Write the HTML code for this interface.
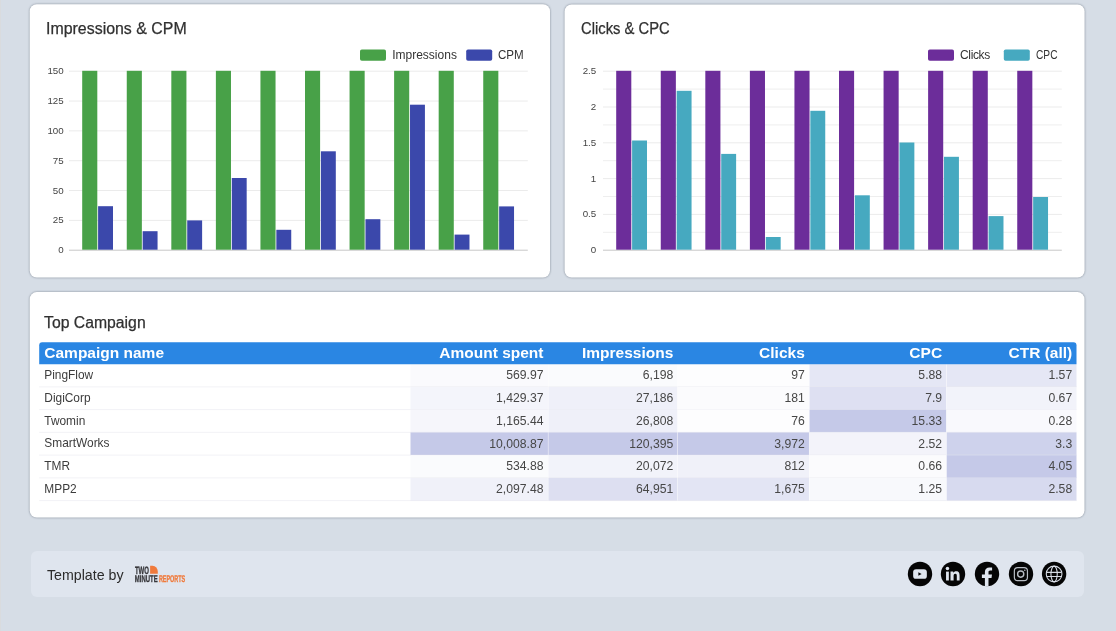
<!DOCTYPE html>
<html><head><meta charset="utf-8"><title>Dashboard</title>
<style>
html,body{margin:0;padding:0;}
body{width:1116px;height:631px;overflow:hidden;background:#d6dde6;font-family:"Liberation Sans", sans-serif;position:relative;color:#333;}
.abs{position:absolute;}
.card{position:absolute;background:#fff;border-radius:7px;box-shadow:0.4px 0.5px 2px 0.4px rgba(60,70,80,.4);}
.title{position:absolute;font-size:15.8px;line-height:18px;color:#303030;-webkit-text-stroke:0.25px #303030;white-space:nowrap;transform-origin:0 0;}
.yl{position:absolute;font-size:9.75px;line-height:10px;color:#444;text-align:right;width:40px;white-space:nowrap;}
.lg{position:absolute;font-size:12px;line-height:14px;color:#333;white-space:nowrap;}
.sw{position:absolute;border-radius:1.5px;}
.bar{position:absolute;}
.gl{position:absolute;height:1px;}
.th{position:absolute;font-weight:bold;font-size:15.5px;line-height:22px;color:#fff;white-space:nowrap;text-align:right;}
.td{position:absolute;font-size:11.9px;line-height:22px;color:#3c3c3c;white-space:nowrap;text-align:right;}
.cell{position:absolute;}
.num{font-size:12.2px;color:#474747;}
</style></head><body><div id="L" style="position:absolute;left:0;top:0;width:1116px;height:631px;will-change:transform">
<div class="abs" style="left:0;top:0;width:1px;height:631px;background:#d9dbde"></div>
<svg class="abs" style="left:0;top:0" width="1116" height="631" viewBox="0 0 1116 631">
<g fill="#fff" style="filter:drop-shadow(0.3px 0.5px 0.9px rgba(55,65,80,.55))">
<rect x="29.7" y="4.3" width="520.3" height="273.3" rx="7"/>
<rect x="564.6" y="4.4" width="520.0" height="273.2" rx="7"/>
<rect x="29.7" y="292.1" width="1054.8" height="225.4" rx="7"/>
</g>
</svg>
<div class="title" style="left:46.2px;top:19.7px;transform:scaleX(1.008)">Impressions &amp; CPM</div>
<svg class="abs" style="left:60.0px;top:44px" width="480" height="216" viewBox="60.0 44 480 216">
<rect x="360.0" y="49.4" width="26" height="11.4" rx="1.8" fill="#48a148"/>
<rect x="466.2" y="49.4" width="26" height="11.4" rx="1.8" fill="#3b48ab"/>
<rect x="69.0" y="70.70" width="458.8" height="1" fill="#ebebeb"/>
<rect x="69.0" y="100.53" width="458.8" height="1" fill="#ebebeb"/>
<rect x="69.0" y="130.37" width="458.8" height="1" fill="#ebebeb"/>
<rect x="69.0" y="160.20" width="458.8" height="1" fill="#ebebeb"/>
<rect x="69.0" y="190.03" width="458.8" height="1" fill="#ebebeb"/>
<rect x="69.0" y="219.87" width="458.8" height="1" fill="#ebebeb"/>
<rect x="69.0" y="249.70" width="458.8" height="1" fill="#c8c8c8"/>
<rect x="82.20" y="70.80" width="15.1" height="178.90" fill="#48a148"/>
<rect x="98.10" y="206.20" width="14.9" height="43.50" fill="#3b48ab"/>
<rect x="126.76" y="70.80" width="15.1" height="178.90" fill="#48a148"/>
<rect x="142.66" y="231.20" width="14.9" height="18.50" fill="#3b48ab"/>
<rect x="171.32" y="70.80" width="15.1" height="178.90" fill="#48a148"/>
<rect x="187.22" y="220.40" width="14.9" height="29.30" fill="#3b48ab"/>
<rect x="215.88" y="70.80" width="15.1" height="178.90" fill="#48a148"/>
<rect x="231.78" y="178.00" width="14.9" height="71.70" fill="#3b48ab"/>
<rect x="260.44" y="70.80" width="15.1" height="178.90" fill="#48a148"/>
<rect x="276.34" y="229.80" width="14.9" height="19.90" fill="#3b48ab"/>
<rect x="305.00" y="70.80" width="15.1" height="178.90" fill="#48a148"/>
<rect x="320.90" y="151.30" width="14.9" height="98.40" fill="#3b48ab"/>
<rect x="349.56" y="70.80" width="15.1" height="178.90" fill="#48a148"/>
<rect x="365.46" y="219.20" width="14.9" height="30.50" fill="#3b48ab"/>
<rect x="394.12" y="70.80" width="15.1" height="178.90" fill="#48a148"/>
<rect x="410.02" y="104.70" width="14.9" height="145.00" fill="#3b48ab"/>
<rect x="438.68" y="70.80" width="15.1" height="178.90" fill="#48a148"/>
<rect x="454.58" y="234.60" width="14.9" height="15.10" fill="#3b48ab"/>
<rect x="483.24" y="70.80" width="15.1" height="178.90" fill="#48a148"/>
<rect x="499.14" y="206.40" width="14.9" height="43.30" fill="#3b48ab"/>
</svg>
<div class="yl" style="left:23.7px;top:66.2px">150</div>
<div class="yl" style="left:23.7px;top:96.0px">125</div>
<div class="yl" style="left:23.7px;top:125.9px">100</div>
<div class="yl" style="left:23.7px;top:155.7px">75</div>
<div class="yl" style="left:23.7px;top:185.5px">50</div>
<div class="yl" style="left:23.7px;top:215.4px">25</div>
<div class="yl" style="left:23.7px;top:245.2px">0</div>
<div class="lg" style="left:392.2px;top:47.8px;">Impressions</div>
<div class="lg" style="left:498.4px;top:47.8px;transform:scaleX(0.965);transform-origin:0 0">CPM</div>
<div class="title" style="left:581.0px;top:20.2px;transform:scaleX(0.936)">Clicks &amp; CPC</div>
<svg class="abs" style="left:594.0px;top:44px" width="480" height="216" viewBox="594.0 44 480 216">
<rect x="928.0" y="49.4" width="26" height="11.4" rx="1.8" fill="#6c2d9a"/>
<rect x="1003.8" y="49.4" width="26" height="11.4" rx="1.8" fill="#46a9c0"/>
<rect x="603.0" y="70.70" width="458.8" height="1" fill="#ebebeb"/>
<rect x="603.0" y="88.60" width="458.8" height="1" fill="#eeeeee"/>
<rect x="603.0" y="106.50" width="458.8" height="1" fill="#ebebeb"/>
<rect x="603.0" y="124.40" width="458.8" height="1" fill="#eeeeee"/>
<rect x="603.0" y="142.30" width="458.8" height="1" fill="#ebebeb"/>
<rect x="603.0" y="160.20" width="458.8" height="1" fill="#eeeeee"/>
<rect x="603.0" y="178.10" width="458.8" height="1" fill="#ebebeb"/>
<rect x="603.0" y="196.00" width="458.8" height="1" fill="#eeeeee"/>
<rect x="603.0" y="213.90" width="458.8" height="1" fill="#ebebeb"/>
<rect x="603.0" y="231.80" width="458.8" height="1" fill="#eeeeee"/>
<rect x="603.0" y="249.70" width="458.8" height="1" fill="#c8c8c8"/>
<rect x="616.20" y="70.80" width="15.1" height="178.90" fill="#6c2d9a"/>
<rect x="632.10" y="140.50" width="14.9" height="109.20" fill="#46a9c0"/>
<rect x="660.76" y="70.80" width="15.1" height="178.90" fill="#6c2d9a"/>
<rect x="676.66" y="90.80" width="14.9" height="158.90" fill="#46a9c0"/>
<rect x="705.32" y="70.80" width="15.1" height="178.90" fill="#6c2d9a"/>
<rect x="721.22" y="153.90" width="14.9" height="95.80" fill="#46a9c0"/>
<rect x="749.88" y="70.80" width="15.1" height="178.90" fill="#6c2d9a"/>
<rect x="765.78" y="237.00" width="14.9" height="12.70" fill="#46a9c0"/>
<rect x="794.44" y="70.80" width="15.1" height="178.90" fill="#6c2d9a"/>
<rect x="810.34" y="110.80" width="14.9" height="138.90" fill="#46a9c0"/>
<rect x="839.00" y="70.80" width="15.1" height="178.90" fill="#6c2d9a"/>
<rect x="854.90" y="195.30" width="14.9" height="54.40" fill="#46a9c0"/>
<rect x="883.56" y="70.80" width="15.1" height="178.90" fill="#6c2d9a"/>
<rect x="899.46" y="142.50" width="14.9" height="107.20" fill="#46a9c0"/>
<rect x="928.12" y="70.80" width="15.1" height="178.90" fill="#6c2d9a"/>
<rect x="944.02" y="156.80" width="14.9" height="92.90" fill="#46a9c0"/>
<rect x="972.68" y="70.80" width="15.1" height="178.90" fill="#6c2d9a"/>
<rect x="988.58" y="216.10" width="14.9" height="33.60" fill="#46a9c0"/>
<rect x="1017.24" y="70.80" width="15.1" height="178.90" fill="#6c2d9a"/>
<rect x="1033.14" y="197.00" width="14.9" height="52.70" fill="#46a9c0"/>
</svg>
<div class="yl" style="left:556.2px;top:66.2px">2.5</div>
<div class="yl" style="left:556.2px;top:102.0px">2</div>
<div class="yl" style="left:556.2px;top:137.8px">1.5</div>
<div class="yl" style="left:556.2px;top:173.6px">1</div>
<div class="yl" style="left:556.2px;top:209.4px">0.5</div>
<div class="yl" style="left:556.2px;top:245.2px">0</div>
<div class="lg" style="left:960.0px;top:47.8px;letter-spacing:-0.35px">Clicks</div>
<div class="lg" style="left:1035.8px;top:47.8px;transform:scaleX(0.85);transform-origin:0 0">CPC</div>
<div class="title" style="left:44.0px;top:314.1px;transform:scaleX(0.998)">Top Campaign</div>
<svg class="abs" style="left:30px;top:340px" width="1056" height="166" viewBox="30 340 1056 166">
<rect x="410.5" y="364.20" width="137.7" height="22.75" fill="#fafafd"/>
<rect x="548.2" y="364.20" width="129.4" height="22.75" fill="#fafbfd"/>
<rect x="677.6" y="364.20" width="131.7" height="22.75" fill="#fdfdfe"/>
<rect x="809.3" y="364.20" width="137.2" height="22.75" fill="#e5e7f5"/>
<rect x="946.5" y="364.20" width="130.0" height="22.75" fill="#e5e7f5"/>
<rect x="39.2" y="386.35" width="1037.3" height="1" fill="#e6e6ee" fill-opacity="0.5"/>
<rect x="410.5" y="386.95" width="137.7" height="22.75" fill="#f4f5fb"/>
<rect x="548.2" y="386.95" width="129.4" height="22.75" fill="#eff0f9"/>
<rect x="677.6" y="386.95" width="131.7" height="22.75" fill="#fbfbfd"/>
<rect x="809.3" y="386.95" width="137.2" height="22.75" fill="#dee0f2"/>
<rect x="946.5" y="386.95" width="130.0" height="22.75" fill="#f2f3fa"/>
<rect x="39.2" y="409.10" width="1037.3" height="1" fill="#e6e6ee" fill-opacity="0.5"/>
<rect x="410.5" y="409.70" width="137.7" height="22.75" fill="#f6f6fb"/>
<rect x="548.2" y="409.70" width="129.4" height="22.75" fill="#eff0f9"/>
<rect x="677.6" y="409.70" width="131.7" height="22.75" fill="#fdfdfe"/>
<rect x="809.3" y="409.70" width="137.2" height="22.75" fill="#c5c9e8"/>
<rect x="946.5" y="409.70" width="130.0" height="22.75" fill="#f9f9fd"/>
<rect x="39.2" y="431.85" width="1037.3" height="1" fill="#e6e6ee" fill-opacity="0.5"/>
<rect x="410.5" y="432.45" width="137.7" height="22.75" fill="#c5c9e8"/>
<rect x="548.2" y="432.45" width="129.4" height="22.75" fill="#c5c9e8"/>
<rect x="677.6" y="432.45" width="131.7" height="22.75" fill="#c5c9e8"/>
<rect x="809.3" y="432.45" width="137.2" height="22.75" fill="#f3f3fa"/>
<rect x="946.5" y="432.45" width="130.0" height="22.75" fill="#ced2ec"/>
<rect x="39.2" y="454.60" width="1037.3" height="1" fill="#e6e6ee" fill-opacity="0.5"/>
<rect x="410.5" y="455.20" width="137.7" height="22.75" fill="#fafbfd"/>
<rect x="548.2" y="455.20" width="129.4" height="22.75" fill="#f2f3fa"/>
<rect x="677.6" y="455.20" width="131.7" height="22.75" fill="#f0f1f9"/>
<rect x="809.3" y="455.20" width="137.2" height="22.75" fill="#fbfbfd"/>
<rect x="946.5" y="455.20" width="130.0" height="22.75" fill="#c5c9e8"/>
<rect x="39.2" y="477.35" width="1037.3" height="1" fill="#e6e6ee" fill-opacity="0.5"/>
<rect x="410.5" y="477.95" width="137.7" height="22.75" fill="#f0f1f9"/>
<rect x="548.2" y="477.95" width="129.4" height="22.75" fill="#dddff1"/>
<rect x="677.6" y="477.95" width="131.7" height="22.75" fill="#e3e5f4"/>
<rect x="809.3" y="477.95" width="137.2" height="22.75" fill="#f8f9fc"/>
<rect x="946.5" y="477.95" width="130.0" height="22.75" fill="#d7daef"/>
<rect x="39.2" y="500.10" width="1037.3" height="1" fill="#e6e6ee" fill-opacity="0.5"/>
<rect x="547.8" y="364.20" width="0.8" height="136.50" fill="#fff" fill-opacity="0.45"/>
<rect x="677.2" y="364.20" width="0.8" height="136.50" fill="#fff" fill-opacity="0.45"/>
<rect x="808.9" y="364.20" width="0.8" height="136.50" fill="#fff" fill-opacity="0.45"/>
<rect x="946.1" y="364.20" width="0.8" height="136.50" fill="#fff" fill-opacity="0.45"/>
<path d="M39.2 364.20 v-19 a3 3 0 0 1 3 -3 h1031.3 a3 3 0 0 1 3 3 v19 z" fill="#2a86e3"/>
</svg>
<div class="th" style="left:44.3px;top:341.8px;text-align:left">Campaign name</div>
<div class="th" style="left:410.5px;top:341.8px;width:133.0px">Amount spent</div>
<div class="th" style="left:548.2px;top:341.8px;width:125.1px">Impressions</div>
<div class="th" style="left:677.6px;top:341.8px;width:127.2px">Clicks</div>
<div class="th" style="left:809.3px;top:341.8px;width:132.8px">CPC</div>
<div class="th" style="left:946.5px;top:341.8px;width:125.7px">CTR (all)</div>
<div class="td" style="left:44.3px;top:364.1px;text-align:left">PingFlow</div>
<div class="td num" style="left:410.5px;top:364.4px;width:133.0px">569.97</div>
<div class="td num" style="left:548.2px;top:364.4px;width:125.1px">6,198</div>
<div class="td num" style="left:677.6px;top:364.4px;width:127.2px">97</div>
<div class="td num" style="left:809.3px;top:364.4px;width:132.8px">5.88</div>
<div class="td num" style="left:946.5px;top:364.4px;width:125.7px">1.57</div>
<div class="td" style="left:44.3px;top:386.8px;text-align:left">DigiCorp</div>
<div class="td num" style="left:410.5px;top:387.1px;width:133.0px">1,429.37</div>
<div class="td num" style="left:548.2px;top:387.1px;width:125.1px">27,186</div>
<div class="td num" style="left:677.6px;top:387.1px;width:127.2px">181</div>
<div class="td num" style="left:809.3px;top:387.1px;width:132.8px">7.9</div>
<div class="td num" style="left:946.5px;top:387.1px;width:125.7px">0.67</div>
<div class="td" style="left:44.3px;top:409.6px;text-align:left">Twomin</div>
<div class="td num" style="left:410.5px;top:409.9px;width:133.0px">1,165.44</div>
<div class="td num" style="left:548.2px;top:409.9px;width:125.1px">26,808</div>
<div class="td num" style="left:677.6px;top:409.9px;width:127.2px">76</div>
<div class="td num" style="left:809.3px;top:409.9px;width:132.8px">15.33</div>
<div class="td num" style="left:946.5px;top:409.9px;width:125.7px">0.28</div>
<div class="td" style="left:44.3px;top:432.3px;text-align:left">SmartWorks</div>
<div class="td num" style="left:410.5px;top:432.6px;width:133.0px">10,008.87</div>
<div class="td num" style="left:548.2px;top:432.6px;width:125.1px">120,395</div>
<div class="td num" style="left:677.6px;top:432.6px;width:127.2px">3,972</div>
<div class="td num" style="left:809.3px;top:432.6px;width:132.8px">2.52</div>
<div class="td num" style="left:946.5px;top:432.6px;width:125.7px">3.3</div>
<div class="td" style="left:44.3px;top:455.1px;text-align:left">TMR</div>
<div class="td num" style="left:410.5px;top:455.4px;width:133.0px">534.88</div>
<div class="td num" style="left:548.2px;top:455.4px;width:125.1px">20,072</div>
<div class="td num" style="left:677.6px;top:455.4px;width:127.2px">812</div>
<div class="td num" style="left:809.3px;top:455.4px;width:132.8px">0.66</div>
<div class="td num" style="left:946.5px;top:455.4px;width:125.7px">4.05</div>
<div class="td" style="left:44.3px;top:477.8px;text-align:left">MPP2</div>
<div class="td num" style="left:410.5px;top:478.1px;width:133.0px">2,097.48</div>
<div class="td num" style="left:548.2px;top:478.1px;width:125.1px">64,951</div>
<div class="td num" style="left:677.6px;top:478.1px;width:127.2px">1,675</div>
<div class="td num" style="left:809.3px;top:478.1px;width:132.8px">1.25</div>
<div class="td num" style="left:946.5px;top:478.1px;width:125.7px">2.58</div>
<div class="abs" style="left:30.5px;top:551px;width:1053px;height:46px;background:#dfe5ee;border-radius:6px"></div>
<div class="abs" style="left:47px;top:567.4px;font-size:14.2px;line-height:16px;color:#2b2b2b;white-space:nowrap">Template by</div>
<svg class="abs" style="left:133px;top:563px" width="56" height="22" viewBox="133 563 56 22">
<g font-family="Liberation Sans, sans-serif" font-weight="bold" font-size="10.6px" stroke-width="0.35">
<text transform="translate(134.9 573.5) rotate(0.03) scale(0.570 1)" fill="#36363a" stroke="#36363a">TWO</text>
<text transform="translate(134.8 582.45) rotate(0.03) scale(0.5636 0.92)" fill="#36363a" stroke="#36363a">MINUTE</text>
<text transform="translate(158.9 582.45) rotate(0.03) scale(0.515 0.92)" fill="#f07a3c" stroke="#f07a3c">REPORTS</text>
</g>
<path d="M150.1 565.8 L152.6 565.8 A5.2 6 0 0 1 157.8 571.8 L157.8 573.7 L150.1 573.7 Z" fill="#f07a3c"/>
</svg>
<svg class="abs" style="left:900px;top:556px" width="180" height="36" viewBox="900 556 180 36">
<circle cx="920.0" cy="574.0" r="12.2" fill="#050505"/>
<circle cx="953.0" cy="574.0" r="12.2" fill="#050505"/>
<circle cx="987.0" cy="574.0" r="12.2" fill="#050505"/>
<circle cx="1021.0" cy="574.0" r="12.2" fill="#050505"/>
<circle cx="1054.1" cy="574.0" r="12.2" fill="#050505"/>
<rect x="913.15" y="569.15" width="13.7" height="9.7" rx="2.9" fill="#dfe5ee"/>
<path d="M918.40 572.20 L921.60 574.00 L918.40 575.80 Z" fill="#050505"/>
<rect x="946.05" y="571.60" width="2.8" height="8.9" fill="#dfe5ee"/>
<circle cx="947.45" cy="568.40" r="1.75" fill="#dfe5ee"/>
<path d="M950.50 580.50 v-8.9 h2.7 v1.2 c0.5 -0.9 1.7 -1.5 3.0 -1.5 c2.8 0 3.4 1.9 3.4 4.3 v4.9 h-2.8 v-4.3 c0 -1.1 0 -2.4 -1.5 -2.4 c-1.5 0 -1.7 1.2 -1.7 2.3 v4.4 z" fill="#dfe5ee"/>
<path d="M984.90 586.50 v-8.6 h-3 v-3.4 h3 v-2.5 c0 -3 1.8 -4.6 4.5 -4.6 c1.3 0 2.4 0.1 2.7 0.15 v3 h-1.8 c-1.5 0 -1.8 0.7 -1.8 1.7 v2.25 h3.5 l-0.5 3.4 h-3 v8.6 z" fill="#dfe5ee"/>
<g fill="none" stroke="#dfe5ee" stroke-opacity="0.82">
<rect x="1014.35" y="567.55" width="13.1" height="13.1" rx="3.4" stroke-width="1.2"/>
<circle cx="1020.70" cy="574.10" r="3.1" stroke-width="1.4"/>
</g>
<circle cx="1024.80" cy="570.30" r="0.8" fill="#dfe5ee" fill-opacity="0.8"/>
<g fill="none" stroke="#dfe5ee" stroke-width="1.1" stroke-opacity="0.95">
<circle cx="1054.10" cy="574.00" r="7.85"/>
<ellipse cx="1054.10" cy="574.00" rx="3.15" ry="7.85"/>
<path d="M1046.70 572.35 h14.6 M1046.70 576.45 h14.6"/>
</g>
</svg>
</div></body></html>
